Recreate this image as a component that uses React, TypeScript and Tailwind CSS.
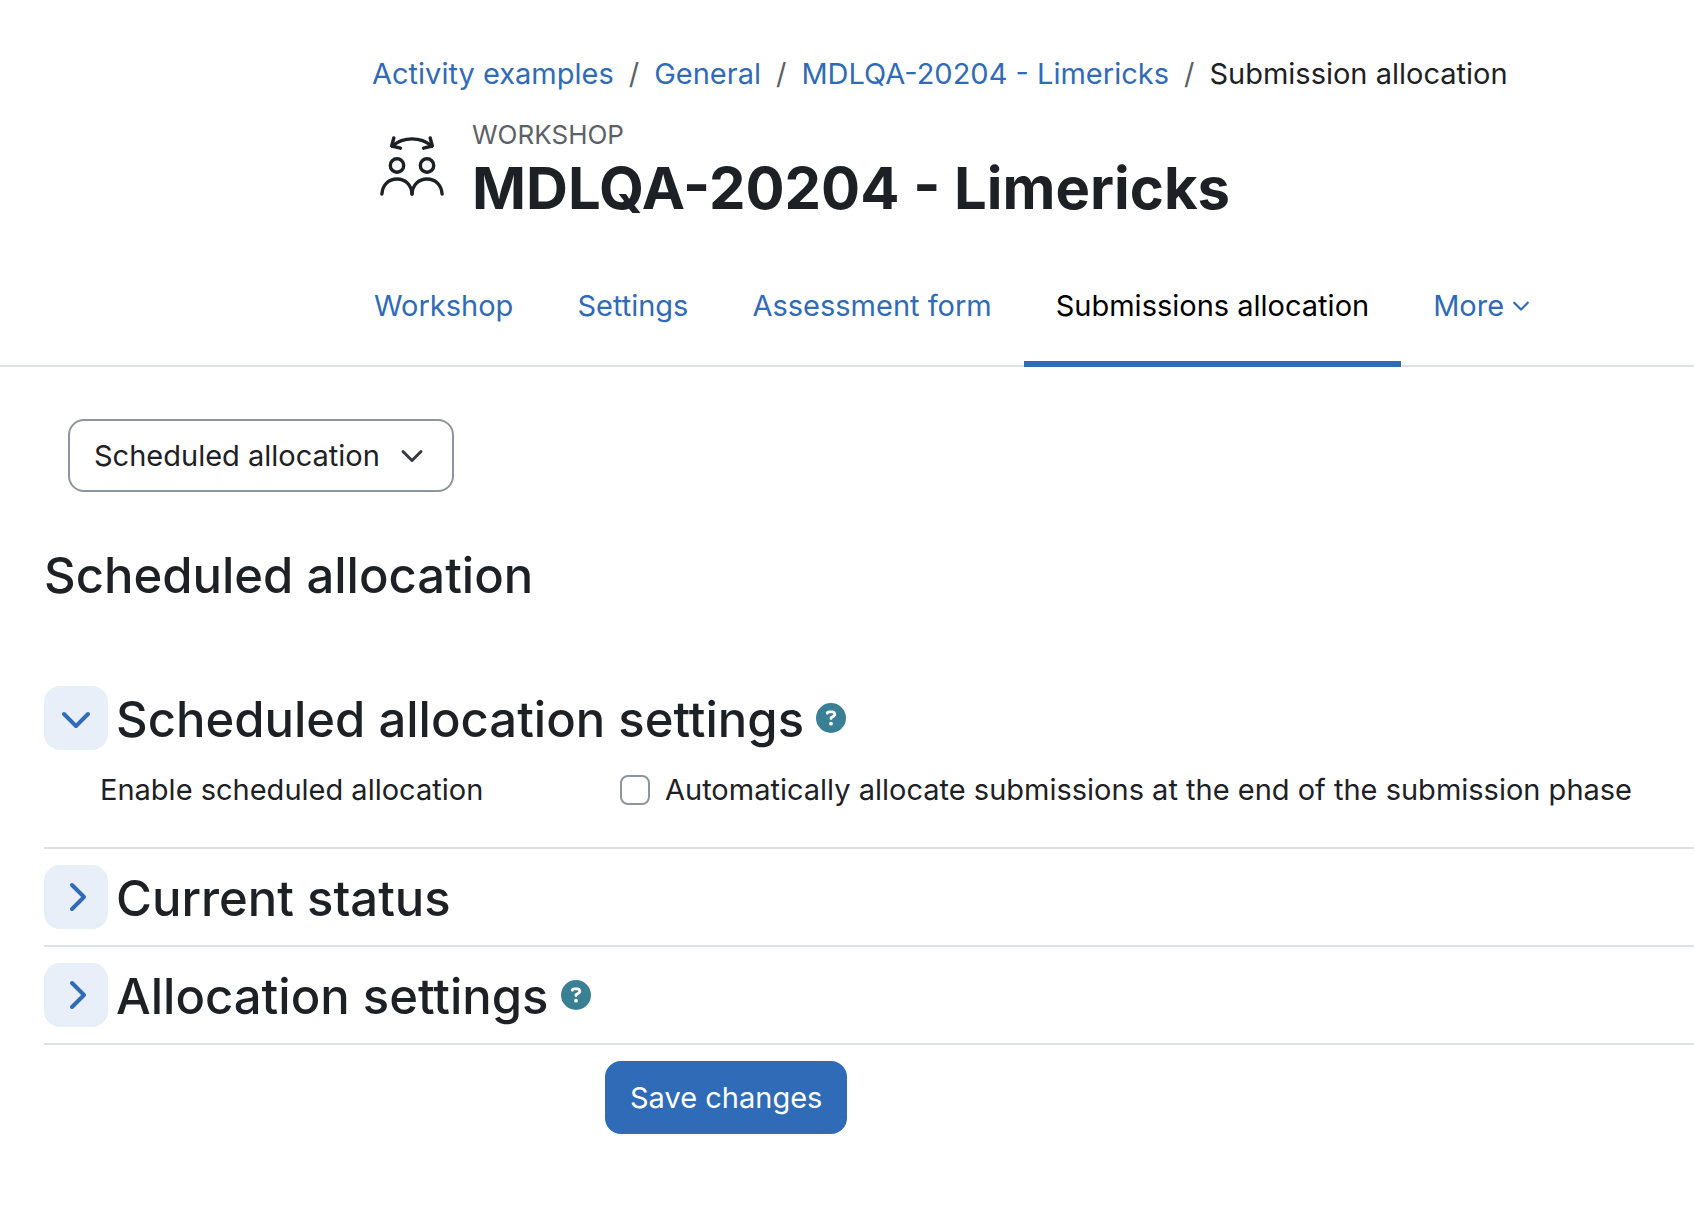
import { useState, type ReactNode } from "react";
import { FaChevronDown, FaChevronRight, FaCircleQuestion } from "react-icons/fa6";

function WorkshopIcon() {
  return (
    <svg
      viewBox="0 0 64 64"
      className="size-16 shrink-0"
      fill="none"
      stroke="#1d2125"
      strokeWidth="3.4"
      strokeLinecap="round"
      strokeLinejoin="round"
      aria-hidden="true"
    >
      <path d="M12 12C24 2.500 40 2.500 52 12" />
      <path d="M13.800 4 11.700 12 20.500 14.200" />
      <path d="M50.200 4 52.300 12 43.500 14.200" />
      <circle cx="17" cy="31.500" r="6.700" />
      <circle cx="47" cy="31.500" r="6.700" />
      <path d="M1.900 60C2.500 51 8.500 45 17 45S31.500 51 32 60" />
      <path d="M32 60C32.500 51 38.500 45 47 45S61.500 51 62.100 60" />
    </svg>
  );
}

const crumbs = ["Activity examples", "General", "MDLQA-20204 - Limericks"];
const tabs = ["Workshop", "Settings", "Assessment form", "Submissions allocation"];

function HelpButton({ label }: { label: string }) {
  return (
    <button type="button" aria-label={label} className="ml-3 cursor-pointer text-[#3a8095]">
      <FaCircleQuestion className="size-[30px]" />
    </button>
  );
}

function Section({
  title,
  help,
  initiallyOpen = false,
  children,
}: {
  title: string;
  help?: boolean;
  initiallyOpen?: boolean;
  children?: ReactNode;
}) {
  const [open, setOpen] = useState(initiallyOpen);
  return (
    <section className="border-b-2 border-[#dee2e6] py-4">
      <div className="flex items-center">
        <button
          type="button"
          aria-expanded={open}
          aria-label={title}
          onClick={() => setOpen(!open)}
          className="mr-2 flex size-16 cursor-pointer items-center justify-center rounded-2xl bg-[#e9eff8] text-[#306bb7]"
        >
          {open ? <FaChevronDown className="size-8" /> : <FaChevronRight className="size-8" />}
        </button>
        <h3 className="pt-1 text-[49px] leading-15 font-medium">{title}</h3>
        {help && <HelpButton label={`Help with ${title}`} />}
      </div>
      {open && children}
    </section>
  );
}

export default function App() {
  return (
    <div className="min-h-screen bg-white font-['Inter',sans-serif] text-[29px] leading-[45px] text-[#1d2125]">
      <header className="border-b-2 border-[#dee2e6] pt-[51px] pl-[342px]">
        <nav aria-label="Breadcrumb" className="pl-[30px]">
          <ol className="flex">
            {crumbs.map((c) => (
              <li key={c} className="flex whitespace-nowrap">
                <a href="#" className="text-[#306bb7]">{c}</a>
                <span className="px-[15px] text-[#5b6167]">/</span>
              </li>
            ))}
            <li className="whitespace-nowrap" aria-current="page">Submission allocation</li>
          </ol>
        </nav>

        <div className="mt-6 flex pl-[38px]">
          <div className="pt-3.5">
            <WorkshopIcon />
          </div>
          <div className="pl-7">
            <p className="text-[26px] leading-[30px] text-[#5b6167] uppercase">Workshop</p>
            <h1 className="text-[58px] leading-[76px] font-bold">MDLQA-20204 - Limericks</h1>
          </div>
        </div>

        <nav aria-label="Workshop" className="mt-[21px] -mb-0.5 flex whitespace-nowrap">
          {tabs.map((t) => (
            <a
              key={t}
              href="#"
              aria-current={t === "Submissions allocation" ? "page" : undefined}
              className={
                t === "Submissions allocation"
                  ? "border-b-6 border-[#306bb7] px-8 pt-9 pb-[33px] text-black"
                  : "border-b-6 border-transparent px-8 pt-9 pb-[33px] text-[#306bb7]"
              }
            >
              {t}
            </a>
          ))}
          <button
            type="button"
            className="flex cursor-pointer items-center gap-2 border-b-6 border-transparent px-8 pt-9 pb-[33px] text-[#306bb7]"
          >
            More
            <FaChevronDown className="mb-0.5 size-[18px]" />
          </button>
        </nav>
      </header>

      <main className="pl-11">
        <div className="mt-[52px] ml-6 inline-grid items-center">
          <select
            aria-label="Allocation method"
            className="col-start-1 row-start-1 cursor-pointer appearance-none rounded-2xl border-2 border-[#8f959e] bg-white py-3 pr-18 pl-6"
          >
            <option>Scheduled allocation</option>
            <option>Manual allocation</option>
            <option>Random allocation</option>
          </select>
          <svg
            viewBox="0 0 16 16"
            className="pointer-events-none col-start-1 row-start-1 mr-[30px] size-6 justify-self-end"
            fill="none"
            stroke="#343a40"
            strokeWidth="2"
            strokeLinecap="round"
            strokeLinejoin="round"
            aria-hidden="true"
          >
            <path d="m2 5 6 6 6-6" />
          </svg>
        </div>

        <h2 className="mt-[53px] text-[49px] leading-[62px] font-medium">Scheduled allocation</h2>

        <form className="mt-[63px]" onSubmit={(e) => e.preventDefault()}>
          <Section title="Scheduled allocation settings" help initiallyOpen>
            <div className="flex items-center pt-[17px] pb-[19px]">
              <span id="enable-label" className="w-[34%] shrink-0 pl-14">Enable scheduled allocation</span>
              <label className="flex items-center gap-[15px] pl-[15px] whitespace-nowrap">
                <input
                  type="checkbox"
                  aria-describedby="enable-label"
                  className="size-[30px] shrink-0 appearance-none rounded-lg border-2 border-[#8f959e] bg-white checked:border-[#306bb7] checked:bg-[#306bb7]"
                />
                Automatically allocate submissions at the end of the submission phase
              </label>
            </div>
          </Section>
          <Section title="Current status" />
          <Section title="Allocation settings" help />
          <div className="pt-4 pl-[34%]">
            <button type="submit" className="cursor-pointer rounded-2xl bg-[#306bb7] px-[25px] py-3.5 text-white">
              Save changes
            </button>
          </div>
        </form>
      </main>
    </div>
  );
}
